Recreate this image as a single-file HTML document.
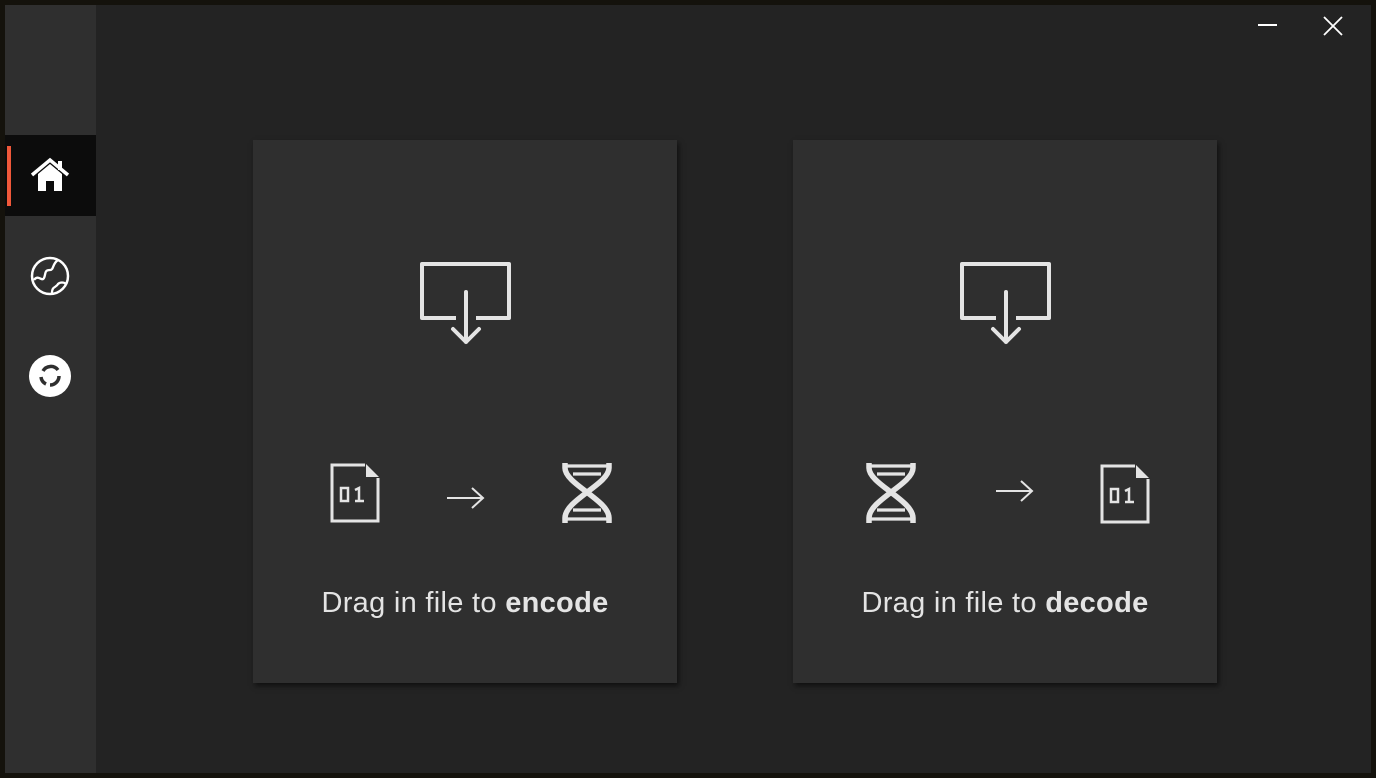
<!DOCTYPE html>
<html><head><meta charset="utf-8"><style>
*{margin:0;padding:0;box-sizing:border-box}
html,body{width:1376px;height:778px;overflow:hidden;background:#14120c;font-family:"Liberation Sans",sans-serif}
#win{position:absolute;left:5px;top:5px;width:1366px;height:768px;background:#232323}
#side{position:absolute;left:0;top:0;width:91px;height:768px;background:#2f2f2f}
#act{position:absolute;left:0;top:130px;width:91px;height:81px;background:#0c0c0c}
#bar{position:absolute;left:2px;top:141px;width:4px;height:60px;background:#f0583a}
.card{position:absolute;top:135px;width:424px;height:543px;background:#2f2f2f;box-shadow:2px 3px 5px rgba(0,0,0,.55)}
.txt{position:absolute;left:0;width:100%;top:447px;text-align:center;color:#e4e4e4;font-size:29px;letter-spacing:0.3px}
.txt b{font-weight:bold}
svg{position:absolute;overflow:visible}
</style></head><body>
<div id="win">
<div id="side"></div>
<div id="act"></div>
<div id="bar"></div>
<svg style="left:25px;top:152px" width="40" height="36" viewBox="0 0 40 36"><path d="M2 18 L20 3 L38 18" fill="none" stroke="#fff" stroke-width="3.5" stroke-linejoin="miter"/><path d="M8 17 L20 7 L32 17 V34 H24 V24 H16 V34 H8Z" fill="#fff"/><rect x="28" y="4" width="4" height="9" fill="#fff"/></svg>
<svg style="left:25px;top:251px" width="40" height="40" viewBox="0 0 40 40"><circle cx="20" cy="20" r="18" fill="none" stroke="#fff" stroke-width="2.5"/><path d="M4 24 C8 18 12 26 14 22 C16 18 14 14 20 14 C24 14 22 8 28 4" fill="none" stroke="#fff" stroke-width="2.3"/><path d="M22 37 C22 30 26 32 28 28 C30 26 34 26 36 28" fill="none" stroke="#fff" stroke-width="2.3"/></svg>
<svg style="left:24px;top:350px" width="42" height="42" viewBox="0 0 42 42"><circle cx="21" cy="21" r="21" fill="#fff"/><path d="M14 16 A9 9 0 0 1 29 15" fill="none" stroke="#2f2f2f" stroke-width="3.5"/><path d="M30 21 A9 9 0 0 1 21 30" fill="none" stroke="#2f2f2f" stroke-width="3.5"/><path d="M17 29 A9 9 0 0 1 12 22" fill="none" stroke="#2f2f2f" stroke-width="3.5"/></svg>
<svg style="left:1253px;top:18px" width="20" height="4"><rect x="0" y="1" width="19" height="2" fill="#fff"/></svg>
<svg style="left:1318px;top:11px" width="20" height="20" viewBox="0 0 20 20"><path d="M1 1 L19 19 M19 1 L1 19" stroke="#fff" stroke-width="1.8"/></svg>

<div class="card" style="left:248px">
  <svg style="left:167px;top:122px" width="92" height="82" viewBox="0 0 92 82"><path d="M36 56 H2 V2 H89 V56 H56" fill="none" stroke="#e4e4e4" stroke-width="4" stroke-linejoin="round"/><path d="M46 30 V80 M33 67 L46 80 L59 67" fill="none" stroke="#e4e4e4" stroke-width="4" stroke-linecap="round" stroke-linejoin="round"/></svg>
  <svg style="left:76px;top:323px" width="52" height="60" viewBox="0 0 52 60"><path d="M36 2 H3 V58 H49 V15" fill="none" stroke="#e4e4e4" stroke-width="3"/><path d="M37 1 L50 14 H37Z" fill="#e4e4e4"/><rect x="12" y="25" width="7" height="13" fill="none" stroke="#e4e4e4" stroke-width="2.5"/><path d="M26 27 L30 25 V38 M26 38 H35" fill="none" stroke="#e4e4e4" stroke-width="2.5"/></svg>
  <svg style="left:192px;top:346px" width="42" height="24" viewBox="0 0 42 24"><path d="M2 12 H38 M27 2 L38 12 L27 22" fill="none" stroke="#e4e4e4" stroke-width="2"/></svg>
  <svg style="left:308px;top:322px" width="52" height="62" viewBox="0 0 52 62"><path d="M4 1 V6 C4 22 48 38 48 56 V61" fill="none" stroke="#e4e4e4" stroke-width="5.5"/><path d="M48 1 V6 C48 22 4 38 4 56 V61" fill="none" stroke="#e4e4e4" stroke-width="5.5"/><path d="M6 4 H46 M12 12 H40 M12 48 H40 M6 57 H46" stroke="#e4e4e4" stroke-width="3.2"/></svg>
  <div class="txt">Drag in file to <b>encode</b></div>
</div>

<div class="card" style="left:788px">
  <svg style="left:167px;top:122px" width="92" height="82" viewBox="0 0 92 82"><path d="M36 56 H2 V2 H89 V56 H56" fill="none" stroke="#e4e4e4" stroke-width="4" stroke-linejoin="round"/><path d="M46 30 V80 M33 67 L46 80 L59 67" fill="none" stroke="#e4e4e4" stroke-width="4" stroke-linecap="round" stroke-linejoin="round"/></svg>
  <svg style="left:72px;top:322px" width="52" height="62" viewBox="0 0 52 62"><path d="M4 1 V6 C4 22 48 38 48 56 V61" fill="none" stroke="#e4e4e4" stroke-width="5.5"/><path d="M48 1 V6 C48 22 4 38 4 56 V61" fill="none" stroke="#e4e4e4" stroke-width="5.5"/><path d="M6 4 H46 M12 12 H40 M12 48 H40 M6 57 H46" stroke="#e4e4e4" stroke-width="3.2"/></svg>
  <svg style="left:201px;top:339px" width="42" height="24" viewBox="0 0 42 24"><path d="M2 12 H38 M27 2 L38 12 L27 22" fill="none" stroke="#e4e4e4" stroke-width="2"/></svg>
  <svg style="left:306px;top:324px" width="52" height="60" viewBox="0 0 52 60"><path d="M36 2 H3 V58 H49 V15" fill="none" stroke="#e4e4e4" stroke-width="3"/><path d="M37 1 L50 14 H37Z" fill="#e4e4e4"/><rect x="12" y="25" width="7" height="13" fill="none" stroke="#e4e4e4" stroke-width="2.5"/><path d="M26 27 L30 25 V38 M26 38 H35" fill="none" stroke="#e4e4e4" stroke-width="2.5"/></svg>
  <div class="txt">Drag in file to <b>decode</b></div>
</div>
</div>
</body></html>
